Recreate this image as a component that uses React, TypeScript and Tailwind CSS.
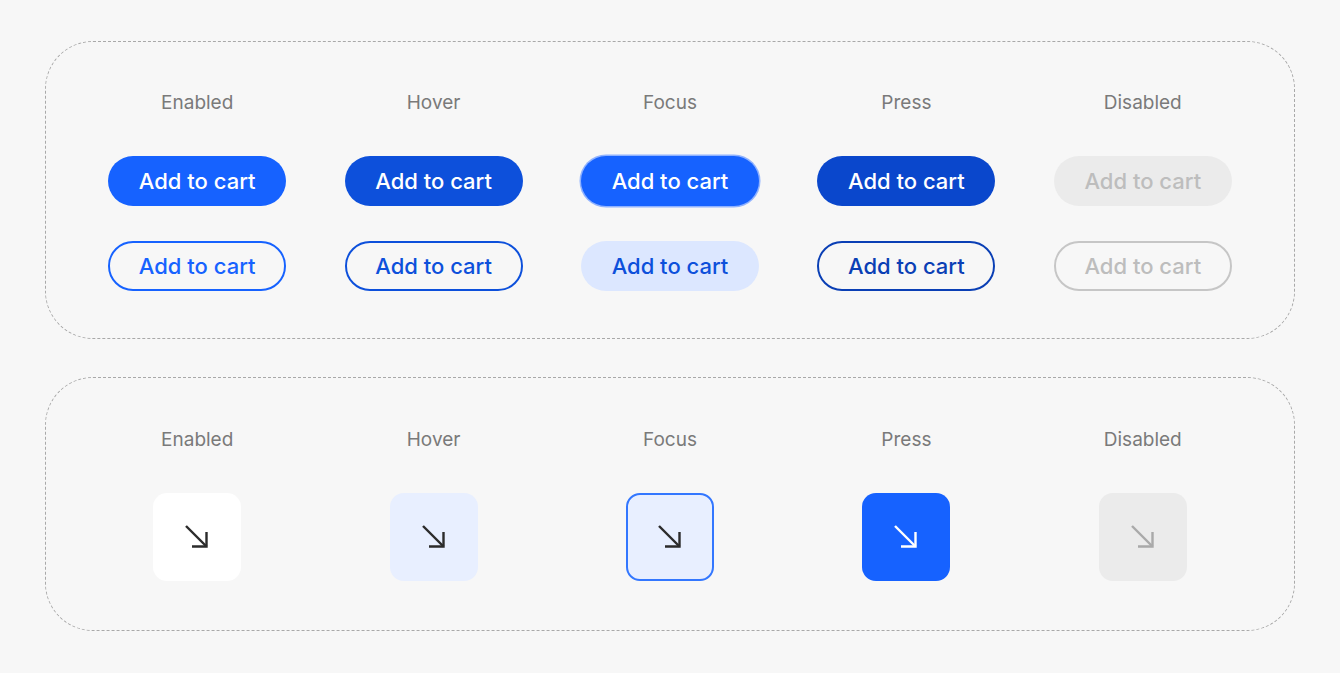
import { ReactNode } from "react";

const states = ["Enabled", "Hover", "Focus", "Press", "Disabled"];

const filled = [
  "bg-[#1662ff] text-white",
  "bg-[#0d50db] text-white",
  "bg-[#1662ff] text-white ring-[1.5px] ring-[#8fb2ff]",
  "bg-[#0a47cc] text-white",
  "bg-[#ebebeb] text-[#bdbdbd]",
];

const outlined = [
  "border-2 border-[#1662ff] text-[#1662ff]",
  "border-2 border-[#0d50db] text-[#0d50db]",
  "bg-[#dce7ff] text-[#0d50db]",
  "border-2 border-[#0a3fb5] text-[#0a3fb5]",
  "border-2 border-[#c6c6c6] text-[#bdbdbd]",
];

const tiles = [
  { box: "bg-white", icon: "#2b2b2b" },
  { box: "bg-[#e8efff]", icon: "#2b2b2b" },
  { box: "bg-[#e8efff] border-2 border-[#3377ff]", icon: "#2b2b2b" },
  { box: "bg-[#1662ff]", icon: "#ffffff" },
  { box: "bg-[#ebebeb]", icon: "#a9a9a9" },
];

function Panel({ children, className }: { children: ReactNode; className: string }) {
  return (
    <div className={"rounded-[48px] border border-dashed border-[#a9a9a9] px-[33px] grid grid-cols-5 " + className}>
      {children}
    </div>
  );
}

function ArrowDownRight({ color }: { color: string }) {
  return (
    <svg width="28" height="28" viewBox="0 0 28 28" fill="none" stroke={color} strokeWidth="2.4">
      <path d="M3 3 L23.5 23.5" />
      <path d="M23.5 9 V23.5 H9" strokeLinejoin="miter" />
    </svg>
  );
}

export default function App() {
  return (
    <div className="min-h-screen bg-[#f7f7f7] px-[45px] pt-[41px] flex flex-col gap-[38px]" style={{ fontFamily: "Inter, 'Noto Sans', sans-serif" }}>
      <Panel className="pt-[49px] pb-[47px]">
        {states.map((s, i) => (
          <div key={s} className="flex flex-col items-center">
            <div className="text-[19px] leading-[24px] text-[#7a7a7a]">{s}</div>
            <div className={"mt-[41px] w-[178px] h-[50px] rounded-full flex items-center justify-center text-[22px] font-medium " + filled[i]}>
              Add to cart
            </div>
            <div className={"mt-[35px] w-[178px] h-[50px] rounded-full flex items-center justify-center text-[22px] font-medium " + outlined[i]}>
              Add to cart
            </div>
          </div>
        ))}
      </Panel>
      <Panel className="pt-[50px] pb-[49px]">
        {states.map((s, i) => (
          <div key={s} className="flex flex-col items-center">
            <div className="text-[19px] leading-[24px] text-[#7a7a7a]">{s}</div>
            <div className={"mt-[41px] w-[88px] h-[88px] rounded-[14px] flex items-center justify-center " + tiles[i].box}>
              <ArrowDownRight color={tiles[i].icon} />
            </div>
          </div>
        ))}
      </Panel>
    </div>
  );
}
